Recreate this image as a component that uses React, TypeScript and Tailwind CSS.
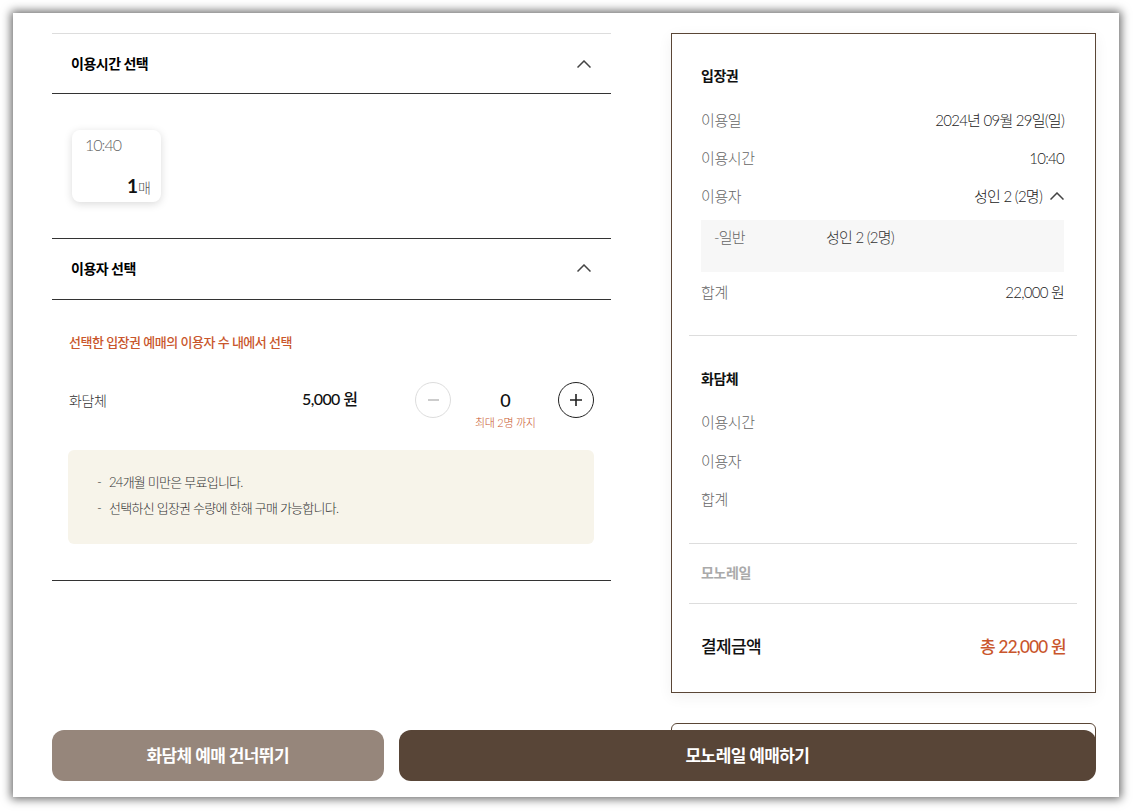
import { ReactNode } from 'react'

const FONT = "font-['Lato','Noto_Sans_CJK_KR',sans-serif]"

const Chevron = ({ className }: { className?: string }) => (
  <svg viewBox="0 0 14 8" fill="none" stroke="currentColor" strokeWidth="1.5" className={className}>
    <path d="M.5 7.5L7 1l6.5 6.5" />
  </svg>
)

const SectionHeader = ({ title, className }: { title: string; className?: string }) => (
  <div className={`flex h-[61px] items-center justify-between border-b border-[#333333] pl-[19px] pr-[20px] ${className}`}>
    <div className="text-[14px] font-bold tracking-[-0.5px] text-black">{title}</div>
    <Chevron className="h-[8px] w-[14px] text-[#444444]" />
  </div>
)

const InfoRow = ({ label, children, tall }: { label: string; children?: ReactNode; tall?: boolean }) => (
  <div className={`flex items-center justify-between ${tall ? 'h-[38.5px]' : 'h-[38px]'}`}>
    <div className="text-[15px] font-light tracking-[-0.4px] text-[#666666]">{label}</div>
    <div className="flex items-center text-[15px] font-light tracking-[-0.75px] text-[#222222]">{children}</div>
  </div>
)

const App = () => {
  return (
    <div className={`h-[811px] w-[1133px] overflow-hidden bg-white p-[13px] pr-[14px] pb-[14px] ${FONT}`}>
      <div className="relative h-[784px] w-[1106px] overflow-hidden bg-white shadow-[0_0_9px_2px_rgba(0,0,0,0.6)]">
        <div className="flex items-start gap-[60px] pl-[39px] pt-[20px]">
          {/* left column */}
          <div className="w-[559px]">
            <SectionHeader title="이용시간 선택" className="border-t border-t-[#dddddd]" />
            <div className="border-b border-[#333333] pb-[36px] pl-[20px] pt-[36px]">
              <div className="flex h-[72px] w-[89px] flex-col justify-between rounded-[8px] bg-white pb-[2px] pl-[13px] pr-[10px] pt-[3px] shadow-[0_2px_8px_rgba(0,0,0,0.15)]">
                <div className="text-[16px] font-light tracking-[-1px] text-[#666666]">10:40</div>
                <div className="flex items-baseline justify-end">
                  <span className="text-[19px] font-bold text-[#111111]">1</span>
                  <span className="text-[14px] font-light text-[#555555]">매</span>
                </div>
              </div>
            </div>
            <SectionHeader title="이용자 선택" className="pb-[2px]" />
            <div className="border-b border-[#333333] pb-[36px] pl-[17px] pr-[17px] pt-[33px]">
              <div className="text-[13px] font-medium leading-[18px] tracking-[-0.5px] text-[#c9562c]">선택한 입장권 예매의 이용자 수 내에서 선택</div>
              <div className="mt-[31px] flex h-[36px] items-center">
                <div className="w-[233px] text-[14px] font-light tracking-[-0.4px] text-[#333333]">화담체</div>
                <div className="mb-[3px] w-[113px] text-[16px] font-medium tracking-[-0.6px] text-[#111111]">5,000 원</div>
                <div className="flex h-[36px] w-[36px] items-center justify-center rounded-full border border-[#dddddd]">
                  <span className="h-[1.5px] w-[11px] bg-[#cccccc]" />
                </div>
                <div className="w-[107px] pl-[2px] text-center text-[18px] font-medium text-[#111111]">0</div>
                <div className="flex h-[36px] w-[36px] items-center justify-center rounded-full border border-[#222222]">
                  <svg viewBox="0 0 12 12" className="h-[12px] w-[12px]" stroke="#222222" strokeWidth="1.6">
                    <path d="M6 0v12M0 6h12" />
                  </svg>
                </div>
              </div>
              <div className="mt-[-3px] pl-[406px] text-[11px] font-light leading-[16px] tracking-[-0.3px] text-[#c9562c]">최대 2명 까지</div>
              <div className="ml-[-1px] mt-[19px] h-[94px] rounded-[6px] bg-[#f7f4ea] pl-[29px] pt-[19px] text-[13px] font-light leading-[26px] tracking-[-0.75px] text-[#333333]">
                <div className="flex gap-[8px]"><span>-</span><span>24개월 미만은 무료입니다.</span></div>
                <div className="flex gap-[8px]"><span>-</span><span>선택하신 입장권 수량에 한해 구매 가능합니다.</span></div>
              </div>
            </div>
          </div>

          {/* right column */}
          <div className="w-[425px]">
            <div className="h-[660px] border border-[#5a4636] bg-white pl-[17px] pr-[18px] shadow-[0_4px_14px_rgba(0,0,0,0.06)]">
              <div className="border-b border-[#dddddd] pb-[24px] pl-[12px] pr-[13px] pt-[32px]">
                <div className="text-[14px] font-bold leading-[20px] tracking-[-0.5px] text-[#111111]">입장권</div>
                <div className="mt-[15px]">
                  <InfoRow label="이용일">2024년 09월 29일(일)</InfoRow>
                  <InfoRow label="이용시간">10:40</InfoRow>
                  <InfoRow label="이용자">
                    성인 2 (2명)
                    <Chevron className="ml-[8px] h-[8px] w-[14px] text-[#444444]" />
                  </InfoRow>
                </div>
                <div className="mt-[5px] flex h-[52px] items-start bg-[#f7f7f7] pl-[13px] pt-[6px] text-[15px] font-light tracking-[-0.75px]">
                  <div className="w-[112px] text-[#666666]">-일반</div>
                  <div className="text-[#333333]">성인 2 (2명)</div>
                </div>
                <div className="mt-[1px]">
                  <InfoRow label="합계">22,000 원</InfoRow>
                </div>
              </div>
              <div className="border-b border-[#dddddd] pb-[24px] pl-[12px] pr-[13px] pt-[33px]">
                <div className="text-[14px] font-bold leading-[20px] tracking-[-0.5px] text-[#111111]">화담체</div>
                <div className="mt-[14px]">
                  <InfoRow tall label="이용시간" />
                  <InfoRow tall label="이용자" />
                  <InfoRow tall label="합계" />
                </div>
              </div>
              <div className="flex h-[60px] items-center border-b border-[#dddddd] px-[12px] pb-[2px]">
                <div className="text-[14px] font-bold tracking-[-0.4px] text-[#aaaaaa]">모노레일</div>
              </div>
              <div className="flex h-[87px] items-center justify-between pl-[12px] pr-[11px]">
                <div className="text-[17px] font-medium tracking-[-0.6px] text-[#111111]">결제금액</div>
                <div className="text-[17px] font-medium tracking-[-0.7px] text-[#c9562c]">총 22,000 원</div>
              </div>
            </div>
            <div className="mt-[30px] h-[40px] rounded-[6px] border border-[#5a4636] bg-white" />
          </div>
        </div>

        {/* bottom fixed buttons */}
        <div className="absolute bottom-[16px] left-[38.5px] flex gap-[15px]">
          <button className="flex h-[51px] w-[332.5px] items-center justify-center rounded-[12px] bg-[#96867b] text-[17px] font-bold tracking-[-0.6px] text-white">화담체 예매 건너뛰기</button>
          <button className="flex h-[51px] w-[697px] items-center justify-center rounded-[12px] bg-[#584537] text-[17px] font-bold tracking-[-0.6px] text-white">모노레일 예매하기</button>
        </div>
      </div>
    </div>
  )
}

export default App
